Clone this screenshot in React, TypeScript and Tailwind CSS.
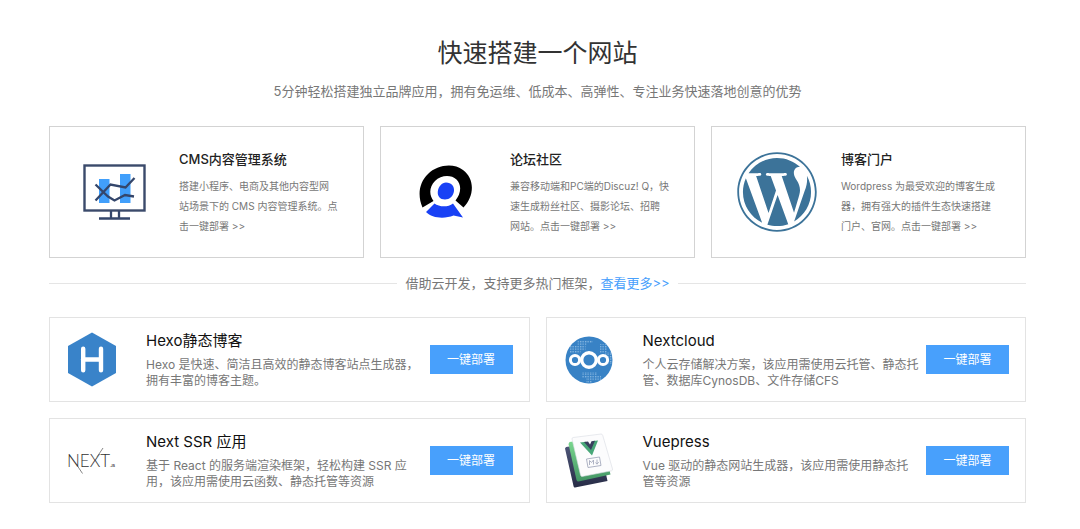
import React from "react";
import { FaWordpress } from "react-icons/fa";

interface Solution {
  title: string;
  description: string;
  icon: React.ReactNode;
}

function CmsIcon() {
  return (
    <svg viewBox="0 0 64 57" className="w-16" aria-hidden="true">
      <rect x="1.5" y="1.5" width="60" height="45" fill="#fff" stroke="#3b4a6b" strokeWidth="2.4" />
      <rect x="16" y="15" width="10.5" height="24" fill="#419ffb" />
      <rect x="37" y="10" width="10.5" height="29" fill="#419ffb" />
      <g fill="none" stroke="#34466b" strokeWidth="2.3">
        <path d="M12.500 20.500L25 32.500 31.500 36.500 42 31 51 32.500" />
        <path d="M12.500 36.500L27.500 20.500 42.500 23.500 51.500 14" />
        <path d="M28 47v7M36 47v7M16 54.500h31" />
      </g>
    </svg>
  );
}

function ForumIcon() {
  return (
    <svg viewBox="0 0 54 54" className="w-[54px]" aria-hidden="true">
      <path
        d="M3.500 42.500C-2 30 .5 17 9 9 18 0 34-2.500 44 5 56 14 55.500 31 44.500 42.500L36.500 35.500C42 29 43 20 37.500 14.500 32 9.500 22 10 16 16 10 22 10 30 14.500 36z"
        fill="#000"
      />
      <path
        d="M27 17.500c5.500 0 8.500 3.700 8 8.500-.6 5-4.500 8.500-9 8.500-5 0-7.700-3.500-7.200-8 .5-5 4.200-9 8.200-9z"
        fill="#1941f5"
      />
      <path
        d="M7 47L15.500 38.500C20 42 29 42.500 34 38.500L44 52.500 34.500 50.500C26 54 13 53.500 7 47z"
        fill="#1941f5"
      />
    </svg>
  );
}

function HexoIcon() {
  return (
    <svg viewBox="0 0 48 55" className="w-12" aria-hidden="true">
      <path d="M24 .5L48 14v27L24 54.500 0 41V14z" fill="#3983c9" />
      <path
        d="M15.200 16.700v21.600M33 16.700v21.600M15 27.500h18"
        fill="none"
        stroke="#fff"
        strokeWidth="4.400"
        strokeLinecap="round"
      />
    </svg>
  );
}

function NextcloudIcon() {
  return (
    <svg viewBox="0 0 48 48" className="w-12" aria-hidden="true">
      <defs>
        <pattern id="dots" width="2.500" height="2.500" patternUnits="userSpaceOnUse">
          <rect width="1.300" height="1.300" fill="#8ab9e2" />
        </pattern>
        <clipPath id="disc">
          <circle cx="24" cy="24" r="23.500" />
        </clipPath>
      </defs>
      <circle cx="24" cy="24" r="23.500" fill="#3882c5" />
      <g clipPath="url(#disc)" fill="url(#dots)">
        <path d="M12.500 4h15v3h-6v3h-1v5h-5v2H5v-7h7.500z" />
        <path d="M35 8h7v8h5v12h-8V17h-4z" />
        <path d="M17 36h15v4h4v5h-9v3h-6v-6h-4z" />
      </g>
      <g fill="#3882c5" stroke="#fff">
        <circle cx="10" cy="24" r="4.600" strokeWidth="3" />
        <circle cx="38" cy="24" r="4.600" strokeWidth="3" />
        <circle cx="24" cy="24" r="7.300" strokeWidth="3.400" />
      </g>
    </svg>
  );
}

function NextIcon() {
  return (
    <svg viewBox="0 0 48 28" className="w-12" role="img" aria-label="Next.js">
      <text x="-1" y="20" fontSize="17" fontWeight="300" fontFamily="Lato, sans-serif" fill="#333">
        NEXT
      </text>
      <text x="42" y="20" fontSize="4" fontWeight="700" fontFamily="Lato, sans-serif" fill="#333">
        .JS
      </text>
      <path d="M9.500 19l5 7.500M29 10L35 1" fill="none" stroke="#666" strokeWidth=".8" />
    </svg>
  );
}

function VuepressIcon() {
  return (
    <svg viewBox="0 0 50 56" className="w-[50px]" aria-hidden="true">
      <defs>
        <linearGradient id="green" x1="0" y1="0" x2="0" y2="1">
          <stop offset="0" stopColor="#7fdc92" />
          <stop offset="1" stopColor="#429564" />
        </linearGradient>
        <linearGradient id="navy" x1="0" y1="0" x2="0" y2="1">
          <stop offset="0" stopColor="#51597c" />
          <stop offset="1" stopColor="#272c46" />
        </linearGradient>
      </defs>
      <path d="M2 14L35 9 43.500 48 11 54.500Q9.800 54.600 9.500 53L1 15.500z" fill="url(#navy)" />
      <path d="M5.500 9L38 5 46.500 41.500 14.500 48.500Q13 48.500 12.500 47L4.500 11z" fill="url(#green)" />
      <path
        d="M9 4.500L37 1Q38.300 1 38.700 2.300L48.500 36Q48.700 37.500 47.500 37.800L18 43.500Q17 43.500 16.500 42L8 6Q7.900 4.800 9 4.500z"
        fill="#fcfcfd"
        stroke="#d9dce2"
        strokeWidth=".6"
      />
      <path d="M16 9.500L22 8.800 26 15 29 8 34 7.500 28 22.500z" fill="#48a778" />
      <path d="M20 9L24 8.500 26 11.500 27.500 8.200 31 7.800 27 17z" fill="#39405e" />
      <g fill="none" stroke="#a5aabd" strokeWidth=".9">
        <path d="M22.500 26L35.500 24 37 32.500 24 34.500z" />
        <path d="M25.500 32V27.500L27.500 29.500 29.500 27V31.500M33 26.500V31M31.500 29.500L33 31.200 34.700 29" />
      </g>
    </svg>
  );
}

const solutions: Solution[] = [
  {
    title: "CMS内容管理系统",
    description:
      "搭建小程序、电商及其他内容型网\n站场景下的 CMS 内容管理系统。点\n击一键部署 >>",
    icon: <CmsIcon />,
  },
  {
    title: "论坛社区",
    description:
      "兼容移动端和PC端的Discuz! Q，快\n速生成粉丝社区、摄影论坛、招聘\n网站。点击一键部署 >>",
    icon: <ForumIcon />,
  },
  {
    title: "博客门户",
    description:
      "Wordpress 为最受欢迎的博客生成\n器，拥有强大的插件生态快速搭建\n门户、官网。点击一键部署 >>",
    icon: <FaWordpress className="size-[82px] text-[#3c7399]" aria-hidden="true" />,
  },
];

const frameworks: Solution[] = [
  {
    title: "Hexo静态博客",
    description: "Hexo 是快速、简洁且高效的静态博客站点生成器，拥有丰富的博客主题。",
    icon: <HexoIcon />,
  },
  {
    title: "Nextcloud",
    description: "个人云存储解决方案，该应用需使用云托管、静态托管、数据库CynosDB、文件存储CFS",
    icon: <NextcloudIcon />,
  },
  {
    title: "Next SSR 应用",
    description: "基于 React 的服务端渲染框架，轻松构建 SSR 应用，该应用需使用云函数、静态托管等资源",
    icon: <NextIcon />,
  },
  {
    title: "Vuepress",
    description: "Vue 驱动的静态网站生成器，该应用需使用静态托管等资源",
    icon: <VuepressIcon />,
  },
];

function SolutionCard({ title, description, icon }: Solution) {
  return (
    <article className="flex min-h-[132px] items-center border border-[#d3d3d3] pr-4">
      <div className="flex w-[129px] shrink-0 justify-center">{icon}</div>
      <div className="min-w-0 flex-1">
        <h2 className="text-[13px] leading-5 font-medium text-[#222]">{title}</h2>
        <p className="mt-[7px] text-[10px] leading-5 whitespace-pre-line text-[#777]">
          {description}
        </p>
      </div>
    </article>
  );
}

function FrameworkCard({ title, description, icon }: Solution) {
  return (
    <article className="flex min-h-[85px] items-center border border-[#e3e3e3] pr-4">
      <div className="flex w-24 shrink-0 justify-center pr-3">{icon}</div>
      <div className="min-w-0 flex-1">
        <h2 className="text-[15px] leading-5 text-[#111]">{title}</h2>
        <p className="mt-1.5 text-[12px] leading-4 text-[#777]">{description}</p>
      </div>
      <button
        type="button"
        className="ml-1.5 h-[29px] w-[83px] shrink-0 cursor-pointer bg-[#48a0fc] text-[12px] text-white"
      >
        一键部署
      </button>
    </article>
  );
}

export default function App() {
  return (
    <main className="bg-white pt-[37px] pr-[54px] pb-6 pl-[49px] font-['Inter','Noto_Sans_CJK_SC',sans-serif]">
      <header className="text-center">
        <h1 className="text-[25px] leading-8 text-[#333]">快速搭建一个网站</h1>
        <p className="mt-3 text-[13px] leading-5 text-[#777]">
          5分钟轻松搭建独立品牌应用，拥有免运维、低成本、高弹性、专注业务快速落地创意的优势
        </p>
      </header>
      <section className="mt-[25px] grid grid-cols-3 gap-4">
        {solutions.map((item) => (
          <SolutionCard key={item.title} {...item} />
        ))}
      </section>
      <div className="mt-[15px] flex items-center gap-2">
        <span className="h-px flex-1 bg-[#e5e5e5]" />
        <p className="text-[13px] leading-5 text-[#777]">
          借助云开发，支持更多热门框架，
          <a href="#more" className="text-[#48a0fc]">
            查看更多&gt;&gt;
          </a>
        </p>
        <span className="h-px flex-1 bg-[#e5e5e5]" />
      </div>
      <section className="mt-6 grid grid-cols-2 gap-4">
        {frameworks.map((item) => (
          <FrameworkCard key={item.title} {...item} />
        ))}
      </section>
    </main>
  );
}
